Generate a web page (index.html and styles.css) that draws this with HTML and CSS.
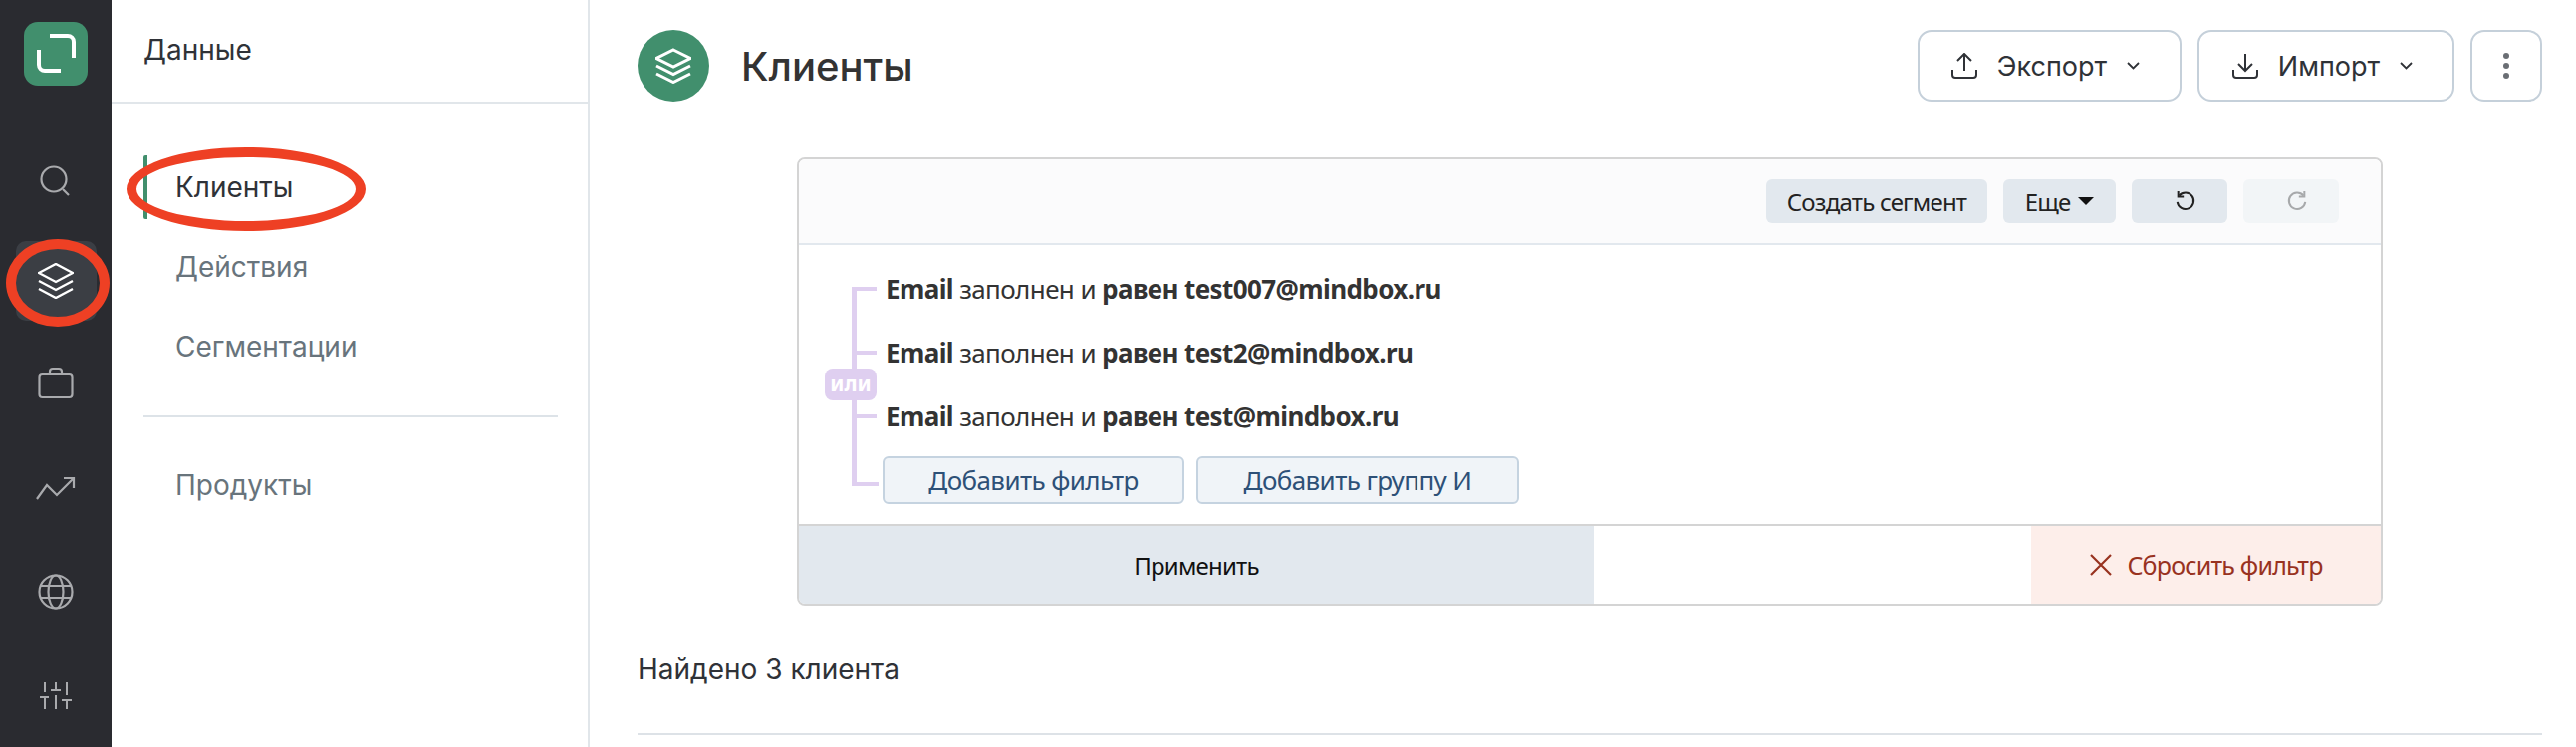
FILE: index.html
```html
<!DOCTYPE html>
<html lang="ru">
<head>
<meta charset="UTF-8">
<title>Клиенты</title>
<link rel="stylesheet" href="styles.css">
</head>
<body>
<div class="app">
    <div class="rail">
        <div class="logo">
            <svg width="64" height="64" viewBox="0 0 64 64" fill="none" stroke="#fff" stroke-width="4">
                <path d="M26 14H44a6 6 0 0 1 6 6V36"/>
                <path d="M15 28V43a6 6 0 0 0 6 6H37"/>
            </svg>
        </div>
        <div class="rail-item rail-item-search">
            <svg width="36" height="36" viewBox="0 0 36 36" fill="none" stroke="#a9aaad" stroke-width="2.2">
                <circle cx="16" cy="18" r="12.5"/>
                <path d="M25 28l6 6"/>
            </svg>
        </div>
        <div class="rail-item rail-item-active">
            <svg width="36" height="36" viewBox="0 0 36 36" fill="none" stroke="#fff" stroke-width="2.4">
                <path d="M18 1L35 10L18 19L1 10Z"/>
                <path d="M1 18L18 27L35 18"/>
                <path d="M1 26L18 35L35 26"/>
            </svg>
        </div>
        <div class="rail-item">
            <svg width="36" height="36" viewBox="0 0 36 36" fill="none" stroke="#a9aaad" stroke-width="2.2">
                <rect x="1.5" y="8" width="33" height="23" rx="3"/>
                <path d="M12 8V5a3 3 0 0 1 3-3h6a3 3 0 0 1 3 3v3"/>
            </svg>
        </div>
        <div class="rail-item">
            <svg width="40" height="36" viewBox="0 0 40 36" fill="none" stroke="#a9aaad" stroke-width="2.2">
                <path d="M1 29L11 15L21 25L38 8"/>
                <path d="M28 8H38V18"/>
            </svg>
        </div>
        <div class="rail-item">
            <svg width="36" height="40" viewBox="0 0 36 40" fill="none" stroke="#a9aaad" stroke-width="2.2">
                <circle cx="18" cy="20" r="16.5"/>
                <ellipse cx="18" cy="20" rx="7.5" ry="16.5"/>
                <path d="M2 14H34M2 26H34"/>
            </svg>
        </div>
        <div class="rail-item">
            <svg width="36" height="36" viewBox="0 0 36 36" fill="none" stroke="#a9aaad" stroke-width="2">
                <path d="M7 5V15M18 5V13M29 5V18M7 20V32M18 18V32M29 23V32"/>
                <path d="M2 20H11M13 13H23M24 23H34"/>
            </svg>
        </div>
    </div>

    <div class="subnav">
        <div class="subnav-title">Данные</div>
        <div class="subnav-list">
            <a class="subnav-link subnav-link-active" href="#">Клиенты</a>
            <a class="subnav-link" href="#">Действия</a>
            <a class="subnav-link" href="#">Сегментации</a>
            <hr class="subnav-line">
            <a class="subnav-link" href="#">Продукты</a>
        </div>
    </div>

    <div class="main">
        <div class="page-head">
            <div class="page-icon">
                <svg width="36" height="36" viewBox="0 0 36 36" fill="none" stroke="#fff" stroke-width="3">
                    <path d="M18 2L35 10.5L18 19L1 10.5Z"/>
                    <path d="M1 18L18 26.5L35 18"/>
                    <path d="M1 26L18 34.5L35 26"/>
                </svg>
            </div>
            <h1>Клиенты</h1>
            <div class="head-actions">
                <button class="head-btn head-btn-export">
                    <svg width="26" height="26" viewBox="0 0 26 26" fill="none" stroke="#2f3237" stroke-width="2">
                        <path d="M1 17V22a3 3 0 0 0 3 3H22a3 3 0 0 0 3-3V17"/>
                        <path d="M13 18V1M6 8L13 1L20 8"/>
                    </svg>
                    <span>Экспорт</span>
                    <svg class="chev" width="13" height="8" viewBox="0 0 13 8" fill="none" stroke="#2f3237" stroke-width="1.8">
                        <path d="M1 1L6.5 6.5L12 1"/>
                    </svg>
                </button>
                <button class="head-btn head-btn-import">
                    <svg width="26" height="26" viewBox="0 0 26 26" fill="none" stroke="#2f3237" stroke-width="2">
                        <path d="M1 17V22a3 3 0 0 0 3 3H22a3 3 0 0 0 3-3V17"/>
                        <path d="M13 1V18M6 11L13 18L20 11"/>
                    </svg>
                    <span>Импорт</span>
                    <svg class="chev" width="13" height="8" viewBox="0 0 13 8" fill="none" stroke="#2f3237" stroke-width="1.8">
                        <path d="M1 1L6.5 6.5L12 1"/>
                    </svg>
                </button>
                <button class="head-btn head-btn-more">
                    <svg width="6" height="26" viewBox="0 0 6 26" fill="#6a6e74">
                        <circle cx="3" cy="3" r="3"/>
                        <circle cx="3" cy="13" r="3"/>
                        <circle cx="3" cy="23" r="3"/>
                    </svg>
                </button>
            </div>
        </div>

        <div class="filter-card">
            <div class="filter-toolbar">
                <button class="tool-btn tool-btn-segment">Создать сегмент</button>
                <button class="tool-btn tool-btn-more">Еще <span class="caret"></span></button>
                <button class="tool-btn tool-btn-icon">
                    <svg width="22" height="22" viewBox="0 0 24 24" fill="none" stroke="#222" stroke-width="2.2">
                        <path d="M5 6a9 9 0 1 1-2 7"/>
                        <path d="M4 1V7H10"/>
                    </svg>
                </button>
                <button class="tool-btn tool-btn-icon tool-btn-off">
                    <svg width="22" height="22" viewBox="0 0 24 24" fill="none" stroke="#a7a9ab" stroke-width="2.2">
                        <path d="M19 6a9 9 0 1 0 2 7"/>
                        <path d="M20 1V7H14"/>
                    </svg>
                </button>
            </div>
            <div class="filter-body">
                <span class="or-badge">или</span>
                <div class="filter-row"><b>Email</b> заполнен и <b>равен test007@mindbox.ru</b></div>
                <div class="filter-row"><b>Email</b> заполнен и <b>равен test2@mindbox.ru</b></div>
                <div class="filter-row"><b>Email</b> заполнен и <b>равен test@mindbox.ru</b></div>
                <div class="filter-row filter-add">
                    <button class="add-btn add-btn-filter">Добавить фильтр</button>
                    <button class="add-btn add-btn-group">Добавить группу И</button>
                </div>
            </div>
            <div class="filter-foot">
                <button class="apply-btn">Применить</button>
                <button class="reset-btn">
                    <svg width="24" height="24" viewBox="0 0 24 24" fill="none" stroke="#98321f" stroke-width="2.2">
                        <path d="M2 2L22 22M22 2L2 22"/>
                    </svg>
                    Сбросить фильтр
                </button>
            </div>
        </div>

        <p class="found">Найдено 3 клиента</p>
        <hr class="main-line">
    </div>
</div>

<!-- красные пометки поверх скриншота -->
<div class="mark mark-rail"></div>
<div class="mark mark-link"></div>
</body>
</html>
```

FILE: styles.css
```css
html, body {
    margin: 0;
    padding: 0;
    height: 100%;
    overflow: hidden;
}
body {
    font-family: Inter, "Noto Sans", sans-serif;
    background-color: #fff;
    color: #333;
    position: relative;
}
.app {
    display: flex;
    height: 750px;
}

/* левая тёмная полоса */
.rail {
    width: 112px;
    flex: none;
    box-sizing: border-box;
    background-color: #2a2b30;
    display: flex;
    flex-direction: column;
    align-items: center;
    padding-top: 22px;
}
.logo {
    width: 64px;
    height: 64px;
    flex: none;
    background-color: #418f6d;
    border-radius: 14px;
    margin-bottom: 54px;
}
.rail-item {
    width: 81px;
    height: 80px;
    flex: none;
    margin-bottom: 24px;
    display: flex;
    align-items: center;
    justify-content: center;
    border-radius: 10px;
}
.rail-item-search {
    margin-bottom: 22px;
}
.rail-item-active {
    background-color: #3b3e44;
}

/* второе меню */
.subnav {
    width: 478px;
    flex: none;
    border-right: 2px solid #e1e6ea;
}
.subnav-title {
    height: 104px;
    box-sizing: border-box;
    padding: 34px 0 0 32px;
    font-size: 28px;
    line-height: 32px;
    color: #2f3237;
    border-bottom: 2px solid #e1e6ea;
}
.subnav-list {
    padding: 52px 30px 0 32px;
}
.subnav-link {
    display: block;
    height: 64px;
    line-height: 64px;
    margin-bottom: 16px;
    padding-left: 32px;
    font-size: 28px;
    color: #68747c;
    text-decoration: none;
}
.subnav-link-active {
    color: #2f3237;
    border-left: 4px solid #418f6d;
    border-radius: 2px;
    padding-left: 28px;
}
.subnav-line {
    border: 0;
    border-top: 2px solid #dde3e8;
    margin: 37px 0 36px;
}

/* основная часть */
.main {
    flex: 1;
    min-width: 0;
    padding: 30px 34px 0 48px;
}
.page-head {
    display: flex;
    align-items: center;
}
.page-icon {
    width: 72px;
    height: 72px;
    border-radius: 50%;
    background-color: #418f6d;
    display: flex;
    align-items: center;
    justify-content: center;
}
h1 {
    margin: 0 0 0 32px;
    font-size: 40px;
    font-weight: 500;
    color: #333;
}
.head-actions {
    margin-left: auto;
    display: flex;
    gap: 16px;
}
.head-btn {
    height: 72px;
    box-sizing: border-box;
    background-color: #fff;
    border: 2px solid #c5d0da;
    border-radius: 14px;
    display: flex;
    align-items: center;
    justify-content: center;
    gap: 20px;
    font-family: Inter, sans-serif;
    font-size: 27px;
    color: #2f3237;
}
.head-btn-export {
    width: 265px;
    padding-right: 14px;
}
.head-btn-import {
    width: 258px;
    padding-right: 13px;
}
.head-btn-more {
    width: 72px;
}

/* карточка фильтра */
.filter-card {
    margin: 56px 160px 0;
    border: 2px solid #d4d4d4;
    border-radius: 8px;
    overflow: hidden;
    font-family: "Noto Sans", sans-serif;
    color: #333;
}
.filter-toolbar {
    height: 86px;
    box-sizing: border-box;
    background-color: #fbfbfc;
    border-bottom: 2px solid #e2e8ee;
    padding-right: 42px;
    display: flex;
    align-items: center;
    justify-content: flex-end;
    gap: 16px;
}
.tool-btn {
    height: 44px;
    border: 0;
    border-radius: 6px;
    background-color: #e2e8ee;
    font-family: "Noto Sans", sans-serif;
    font-size: 24px;
    letter-spacing: -0.8px;
    color: #222;
    display: flex;
    align-items: center;
    justify-content: center;
}
.tool-btn-segment {
    width: 222px;
}
.tool-btn-more {
    width: 113px;
    gap: 8px;
}
.tool-btn-icon {
    width: 96px;
    padding-left: 18px;
}
.tool-btn-off {
    background-color: #f2f5f7;
}
.caret {
    width: 0;
    height: 0;
    border-left: 8px solid transparent;
    border-right: 8px solid transparent;
    border-top: 8px solid #111;
}
.filter-body {
    position: relative;
    height: 280px;
    box-sizing: border-box;
    padding: 12px 0 0 87px;
}
/* вертикаль дерева */
.filter-body::before {
    content: "";
    position: absolute;
    left: 53px;
    top: 42px;
    height: 198px;
    border-left: 5px solid #dfcff0;
}
.or-badge {
    position: absolute;
    left: 26px;
    top: 124px;
    width: 52px;
    height: 32px;
    border-radius: 8px;
    background-color: #dfcff0;
    color: #fff;
    font-size: 21px;
    font-weight: 700;
    line-height: 30px;
    text-align: center;
}
.filter-row {
    position: relative;
    height: 64px;
    line-height: 64px;
    font-size: 26px;
    letter-spacing: -0.6px;
    white-space: nowrap;
}
.filter-row::before {
    content: "";
    position: absolute;
    left: -34px;
    top: 30px;
    width: 25px;
    height: 4px;
    background-color: #dfcff0;
}
.filter-add {
    display: flex;
    gap: 12px;
    align-items: flex-start;
    margin: 8px 0 0 -3px;
}
.filter-add::before {
    left: -31px;
    top: 26px;
    width: 27px;
}
.add-btn {
    height: 48px;
    box-sizing: border-box;
    border: 2px solid #c5d3e0;
    border-radius: 6px;
    background-color: #f0f4f8;
    color: #2d5077;
    font-family: "Noto Sans", sans-serif;
    font-size: 26px;
    letter-spacing: -0.6px;
}
.add-btn-filter {
    width: 303px;
}
.add-btn-group {
    width: 324px;
}
.filter-foot {
    height: 78px;
    border-top: 2px solid #d4d4d4;
    display: flex;
    justify-content: space-between;
}
.apply-btn, .reset-btn {
    border: 0;
    font-family: "Noto Sans", sans-serif;
    font-size: 24px;
    letter-spacing: -0.8px;
}
.apply-btn {
    width: 798px;
    background-color: #e2e8ee;
    color: #111;
}
.reset-btn {
    width: 351px;
    background-color: #fdeeea;
    color: #98321f;
    font-size: 25px;
    display: flex;
    align-items: center;
    justify-content: center;
    gap: 14px;
}
.found {
    margin: 48px 0 0;
    font-size: 28px;
    line-height: 32px;
    color: #2f3237;
}
.main-line {
    border: 0;
    border-top: 2px solid #dde2e7;
    margin: 48px 0 0;
}

/* красные овалы */
.mark {
    position: absolute;
    box-sizing: border-box;
    border: 10px solid #ee4024;
    border-radius: 50%;
}
.mark-rail {
    left: 6px;
    top: 240px;
    width: 104px;
    height: 88px;
}
.mark-link {
    left: 127px;
    top: 148px;
    width: 240px;
    height: 84px;
}
```
